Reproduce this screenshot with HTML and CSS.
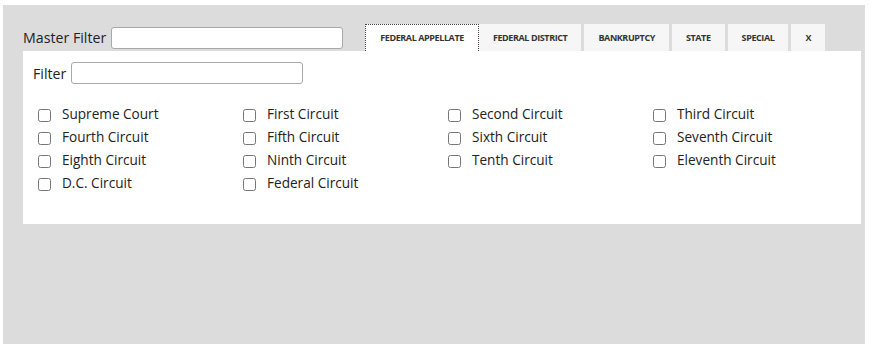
FILE: index.html
```html
<!DOCTYPE html>
<html lang="en">
<head>
<meta charset="utf-8">
<title>Court Filter</title>
<link rel="stylesheet" href="styles.css">
</head>
<body>
<div class="panel">
  <div class="header">
    <label class="master-label">Master Filter</label>
    <input class="text-input master-input" type="text">
    <ul class="tabs">
      <li class="tab active">FEDERAL APPELLATE</li>
      <li class="tab">FEDERAL DISTRICT</li>
      <li class="tab">BANKRUPTCY</li>
      <li class="tab">STATE</li>
      <li class="tab">SPECIAL</li>
      <li class="tab">X</li>
    </ul>
  </div>
  <div class="content">
    <div class="filter-row">
      <label class="filter-label">Filter</label>
      <input class="text-input filter-input" type="text">
    </div>
    <div class="court-grid">
      <label class="court"><input type="checkbox"><span>Supreme Court</span></label>
      <label class="court"><input type="checkbox"><span>First Circuit</span></label>
      <label class="court"><input type="checkbox"><span>Second Circuit</span></label>
      <label class="court"><input type="checkbox"><span>Third Circuit</span></label>
      <label class="court"><input type="checkbox"><span>Fourth Circuit</span></label>
      <label class="court"><input type="checkbox"><span>Fifth Circuit</span></label>
      <label class="court"><input type="checkbox"><span>Sixth Circuit</span></label>
      <label class="court"><input type="checkbox"><span>Seventh Circuit</span></label>
      <label class="court"><input type="checkbox"><span>Eighth Circuit</span></label>
      <label class="court"><input type="checkbox"><span>Ninth Circuit</span></label>
      <label class="court"><input type="checkbox"><span>Tenth Circuit</span></label>
      <label class="court"><input type="checkbox"><span>Eleventh Circuit</span></label>
      <label class="court"><input type="checkbox"><span>D.C. Circuit</span></label>
      <label class="court"><input type="checkbox"><span>Federal Circuit</span></label>
    </div>
  </div>
</div>
</body>
</html>
```

FILE: styles.css
```css
html, body {
  margin: 0;
  padding: 0;
  background: #ffffff;
}

body {
  font-family: "Open Sans", "Noto Sans", sans-serif;
  font-size: 13.6px;
  color: #222222;
}

.panel {
  box-sizing: border-box;
  width: 862px;
  height: 339px;
  margin: 5px 0 0 3px;
  padding: 19px 4px 0 20px;
  background: #dcdcdc;
}

.header {
  display: flex;
  align-items: center;
  height: 27px;
}

.master-label {
  font-size: 14.2px;
  margin-right: 5px;
}

.text-input {
  box-sizing: border-box;
  width: 232px;
  height: 22px;
  margin: 0;
  padding: 2px 4px;
  border: 1px solid #a9a9a9;
  border-radius: 3px;
  background: #ffffff;
  font: inherit;
}

.master-input {
  margin-right: 22px;
}

.tabs {
  display: flex;
  align-self: stretch;
  margin: 0;
  padding: 0;
  list-style: none;
}

.tab {
  display: flex;
  align-items: center;
  padding: 0 14px 1px;
  margin-right: 3px;
  background: #f6f6f6;
  font-family: "Open Sans", sans-serif;
  font-weight: 700;
  font-size: 9px;
  letter-spacing: -0.4px;
  color: #333333;
}

.tab.active {
  background: #ffffff;
  border: 1px dotted #444444;
  border-bottom: none;
  padding: 0 14px 1px;
  margin-right: 0;
}

.content {
  box-sizing: border-box;
  height: 173px;
  background: #ffffff;
  padding: 11px 10px 0 11px;
}

.filter-row {
  display: flex;
  align-items: center;
}

.filter-label {
  font-size: 14.2px;
  margin-left: -1px;
  margin-right: 5px;
}

.court-grid {
  display: grid;
  grid-template-columns: repeat(4, 205px);
  grid-auto-rows: 23px;
  margin-top: 18px;
}

.court {
  display: flex;
  align-items: center;
}

.court input {
  width: 13px;
  height: 13px;
  margin: 4px 11px 0 4px;
}
```
